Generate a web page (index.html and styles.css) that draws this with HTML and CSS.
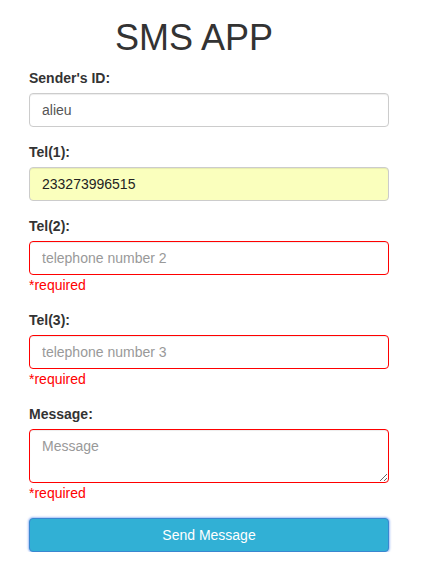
FILE: index.html
```html
<!DOCTYPE html>
<html>
<head>
<meta charset="utf-8">
<link rel="stylesheet" href="styles.css">
</head>
<body>
<div class="container">
  <h1 class="title">SMS APP</h1>
  <form class="form">
    <div class="group">
      <label class="label">Sender's ID:</label>
      <input class="field" type="text" value="alieu">
    </div>
    <div class="group">
      <label class="label">Tel(1):</label>
      <input class="field filled" type="text" value="233273996515">
    </div>
    <div class="group">
      <label class="label">Tel(2):</label>
      <input class="field invalid" type="text" placeholder="telephone number 2">
      <div class="req">*required</div>
    </div>
    <div class="group">
      <label class="label">Tel(3):</label>
      <input class="field invalid" type="text" placeholder="telephone number 3">
      <div class="req">*required</div>
    </div>
    <div class="group">
      <label class="label">Message:</label>
      <textarea class="field area invalid" placeholder="Message"></textarea>
      <div class="req">*required</div>
    </div>
    <button class="send" type="button">Send Message</button>
  </form>
</div>
</body>
</html>
```
FILE: styles.css
```css
* { box-sizing: border-box; }
html, body { margin: 0; padding: 0; background: #fff; }
body {
  font-family: "Liberation Sans", Arial, sans-serif;
  font-size: 14px;
  line-height: 20px;
  color: #333;
}
.container {
  width: 360px;
  margin-left: 29px;
}
.title {
  margin: 18px 0 10px;
  padding-left: 86px;
  font-size: 36px;
  font-weight: 500;
  line-height: 40px;
  color: #333;
}
.form { display: flex; flex-direction: column; }
.group {
  display: flex;
  flex-direction: column;
  margin-bottom: 15px;
}
.label {
  font-weight: bold;
  margin-bottom: 5px;
  line-height: 20px;
}
.field {
  display: block;
  width: 100%;
  height: 34px;
  padding: 6px 12px;
  font-family: "Liberation Sans", Arial, sans-serif;
  font-size: 14px;
  line-height: 20px;
  color: #555;
  background: #fff;
  border: 1px solid #ccc;
  border-radius: 4px;
  box-shadow: inset 0 1px 1px rgba(0,0,0,.075);
  margin: 0;
  outline: none;
}
.field::placeholder { color: #999; }
.filled { background: #faffbd; color: #222; }
.invalid { border-color: #f00; }
.area { height: 54px; resize: vertical; }
.req {
  color: #f00;
  line-height: 20px;
}
.send {
  display: block;
  width: 100%;
  height: 34px;
  padding: 6px 12px;
  font-family: "Liberation Sans", Arial, sans-serif;
  font-size: 14px;
  line-height: 20px;
  color: #fff;
  background: #31b0d5;
  border: 1px solid #3a87d0;
  border-radius: 4px;
  box-shadow: 0 0 2px 1px rgba(102,150,240,.6);
  margin: 0;
}
```
